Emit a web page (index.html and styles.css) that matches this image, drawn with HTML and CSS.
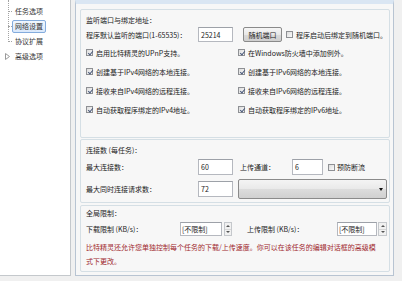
FILE: index.html
```html
<!DOCTYPE html>
<html lang="zh-CN">
<head>
<meta charset="utf-8">
<title>网络设置</title>
<link rel="stylesheet" href="styles.css">
</head>
<body>
<div class="app">
  <div class="tree">
    <div class="node"><span class="conn"></span><span class="label">任务选项</span></div>
    <div class="node"><span class="conn"></span><span class="label sel">网络设置</span></div>
    <div class="node"><span class="conn"></span><span class="label">协议扩展</span></div>
    <div class="node"><svg class="expander" width="5" height="7" viewBox="0 0 5 7"><polygon points="0.5,0.5 4.5,3.5 0.5,6.5" fill="none" stroke="#9a9a9a" stroke-width="1"/></svg><span class="label">高级选项</span></div>
  </div>

  <div class="page">
    <section class="group g1">
      <div class="title">监听端口与绑定地址：</div>
      <div class="row port-row">
        <span class="lbl w112">程序默认监听的端口(1-65535)：</span>
        <span class="field w35">25214</span>
        <span class="btn">随机端口</span>
        <span class="check"><span class="box"></span>程序启动后绑定到随机端口。</span>
      </div>
      <div class="checks">
        <span class="check"><span class="box on"></span>启用比特精灵的UPnP支持。</span>
        <span class="check"><span class="box on"></span>在Windows防火墙中添加例外。</span>
        <span class="check"><span class="box on"></span>创建基于IPv4网络的本地连接。</span>
        <span class="check"><span class="box on"></span>创建基于IPv6网络的本地连接。</span>
        <span class="check"><span class="box on"></span>接收来自IPv4网络的远程连接。</span>
        <span class="check"><span class="box on"></span>接收来自IPv6网络的远程连接。</span>
        <span class="check"><span class="box on"></span>自动获取程序绑定的IPv4地址。</span>
        <span class="check"><span class="box on"></span>自动获取程序绑定的IPv6地址。</span>
      </div>
    </section>

    <section class="group g2">
      <div class="title">连接数 (每任务)：</div>
      <div class="row conn-row1">
        <span class="lbl w112">最大连接数：</span>
        <span class="field w35 h16">60</span>
        <span class="lbl up-lbl">上传通道：</span>
        <span class="field w31 h16">6</span>
        <span class="check prev"><span class="box"></span>预防断流</span>
      </div>
      <div class="row conn-row2">
        <span class="lbl w112">最大同时连接请求数：</span>
        <span class="field w35 h16">72</span>
        <span class="combo"><span class="arrow"></span></span>
      </div>
    </section>

    <section class="group g3">
      <div class="title">全局限制：</div>
      <div class="row limit-row">
        <span class="lbl w94">下载限制 (KB/s)：</span>
        <span class="field w42 tight">[不限制]</span>
        <span class="spin"><span class="s-up"></span><span class="s-dn"></span></span>
        <span class="lbl ul-lbl">上传限制 (KB/s)：</span>
        <span class="field w40 tight">[不限制]</span>
        <span class="spin s2"><span class="s-up"></span><span class="s-dn"></span></span>
      </div>
      <p class="note">比特精灵还允许您单独控制每个任务的下载/上传速度。你可以在该任务的编辑对话框的高级模式下更改。</p>
    </section>
  </div>
</div>
</body>
</html>
```

FILE: styles.css
```css
* { box-sizing: border-box; }

html, body {
  margin: 0;
  padding: 0;
}

body {
  width: 402px;
  height: 281px;
  overflow: hidden;
  background: #f0f0f0;
  font-family: "Noto Sans CJK SC", "Noto Sans", sans-serif;
  font-size: 7px;
  line-height: 10px;
  color: #222;
}

.app {
  display: flex;
  align-items: flex-start;
}

/* ---------- tree ---------- */
.tree {
  position: relative;
  width: 71px;
  height: 276px;
  background: #fff;
  border-right: 1px solid #c4c8cc;
  border-bottom: 1px solid #c4c8cc;
  padding-top: 4px;
  display: flex;
  flex-direction: column;
}

.tree::before {
  content: "";
  position: absolute;
  left: 8px;
  top: 0;
  height: 42px;
  border-left: 1px dotted #a3a3a3;
}

.node {
  height: 15px;
  display: flex;
  align-items: center;
}

.conn {
  width: 4px;
  margin-left: 8px;
  border-top: 1px dotted #a3a3a3;
}

.expander {
  margin-left: 5px;
  margin-right: 2px;
  display: block;
}

.label {
  border: 1px solid transparent;
  border-radius: 2px;
  padding: 1px 2px;
  line-height: 9px;
  color: #333;
}

.label.sel {
  border-color: #84acdd;
  background: linear-gradient(#f1f7fe, #d9e8fb);
}

/* ---------- page ---------- */
.page {
  width: 319px;
  height: 276px;
  margin-left: 4px;
  background: #f7f7f7;
  border: 1px solid #b8c4d2;
  border-top: 4px solid #dae6f3;
  padding: 5px 3px 3px 4px;
  display: flex;
  flex-direction: column;
}

.group {
  width: 310px;
  border: 1px solid #d5dfe5;
  border-radius: 2px;
  padding: 5px 2px 0 5px;
  display: flex;
  flex-direction: column;
}

.g1 { padding-bottom: 18px; }
.g2 { margin-top: 1px; padding-bottom: 3px; }
.g3 { margin-top: 2px; padding-top: 2px; padding-bottom: 3px; }

.title {
  height: 10px;
  white-space: nowrap;
}

.row {
  display: flex;
  align-items: center;
  white-space: nowrap;
}

.port-row { height: 15px; margin-top: 2px; }
.conn-row1 { height: 16px; margin-top: 4px; }
.conn-row2 { height: 20px; margin-top: 4px; }
.limit-row { height: 14px; margin-top: 4px; }

.lbl { flex: none; }
.w112 { width: 112px; }
.w94 { width: 94px; }
.up-lbl { width: 52px; margin-left: 7px; }
.ul-lbl { width: 90px; margin-left: 15px; }

.field {
  flex: none;
  height: 15px;
  background: #fff;
  border: 1px solid #b5b8bf;
  border-top-color: #9da1a8;
  padding-left: 2px;
  display: flex;
  align-items: center;
  color: #222;
}

.field.tight { padding-left: 1px; height: 14px; }
.h16 { height: 16px; }
.w35 { width: 35px; }
.w31 { width: 31px; }
.w42 { width: 42px; }
.w40 { width: 40px; }

.btn {
  flex: none;
  width: 39px;
  height: 15px;
  margin-left: 10px;
  border: 1px solid #8a8a8a;
  border-radius: 2px;
  background: linear-gradient(#f6f6f6 0%, #e8e8e8 50%, #dadada 51%, #cfcfcf 100%);
  display: flex;
  align-items: center;
  justify-content: center;
  color: #222;
}

.check {
  display: flex;
  align-items: center;
  white-space: nowrap;
}

.port-row .check { margin-left: 4px; }
.prev { margin-left: 5px; }

.box {
  flex: none;
  width: 7px;
  height: 7px;
  margin-right: 3px;
  border: 1px solid #8e9094;
  background: linear-gradient(135deg, #dcdcdc, #fbfbfb);
  position: relative;
}

.prev .box { margin-right: 2px; }

.box.on::after {
  content: "";
  position: absolute;
  left: 1.5px;
  top: -0.5px;
  width: 2px;
  height: 4px;
  border-right: 1px solid #4b5b7c;
  border-bottom: 1px solid #4b5b7c;
  transform: rotate(40deg);
}

.checks {
  margin-top: 1px;
  display: grid;
  grid-template-columns: 152px 1fr;
  grid-auto-rows: 19px;
  align-items: center;
}

.combo {
  flex: none;
  width: 149px;
  height: 20px;
  margin-left: 5px;
  border: 1px solid #8a8a8a;
  border-radius: 2px;
  background: linear-gradient(#f4f4f4 0%, #e9e9e9 50%, #dcdcdc 51%, #d0d0d0 100%);
  display: flex;
  align-items: center;
  justify-content: flex-end;
  padding-right: 3px;
}

.arrow {
  width: 0;
  height: 0;
  border-left: 2.5px solid transparent;
  border-right: 2.5px solid transparent;
  border-top: 3px solid #111;
}

.spin {
  flex: none;
  width: 8px;
  height: 14px;
  margin-left: 2px;
  display: flex;
  flex-direction: column;
  border: 1px solid #c5c8cc;
  background: #f1f1f1;
}

.spin.s2 { margin-left: 1px; width: 9px; }

.s-up, .s-dn {
  flex: 1;
  display: flex;
  align-items: center;
  justify-content: center;
}

.s-up { border-bottom: 1px solid #d6d6d6; }

.s-up::after {
  content: "";
  border-left: 2px solid transparent;
  border-right: 2px solid transparent;
  border-bottom: 2px solid #555;
}

.s-dn::after {
  content: "";
  border-left: 2px solid transparent;
  border-right: 2px solid transparent;
  border-top: 2px solid #555;
}

.note {
  margin: 4px 0 0 0;
  width: 293px;
  line-height: 14px;
  color: #a0282d;
}
```
